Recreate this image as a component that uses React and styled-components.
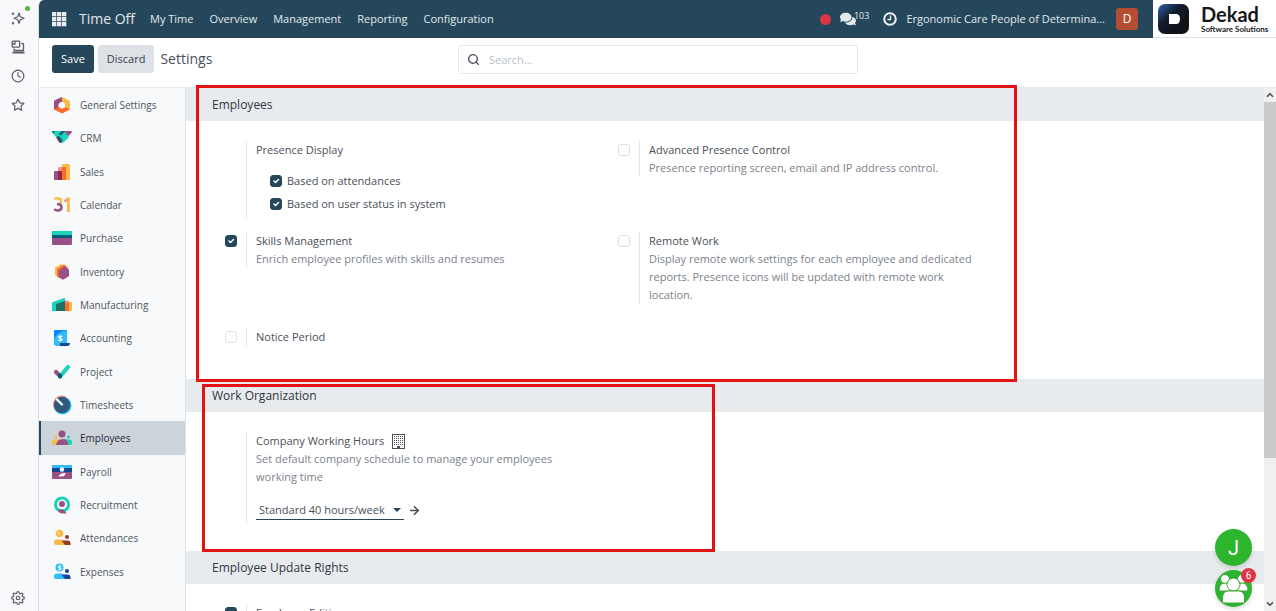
import { useState } from "react";
import styled, { createGlobalStyle } from "styled-components";
import { FaComments } from "react-icons/fa";
import { FiArrowRight, FiChevronDown, FiChevronUp, FiClock, FiSearch, FiSettings, FiStar } from "react-icons/fi";

const GlobalStyle = createGlobalStyle`
  *, *::before, *::after {
    box-sizing: border-box;
  }

  body {
    margin: 0;
    background: #f9f9fb;
    color: #4a4f59;
    font-family: "Open Sans", "Noto Sans", sans-serif;
    font-size: 11px;
    line-height: 18px;
  }

  button, input, select {
    font: inherit;
    color: inherit;
  }

  a {
    color: inherit;
    text-decoration: none;
  }
`;

const Page = styled.div`
  position: relative;
  display: flex;
  height: 100vh;
  overflow: hidden;
`;

const Rail = styled.aside`
  display: flex;
  flex: 0 0 38px;
  flex-direction: column;
  align-items: center;
  gap: 15px;
  padding: 11px 3px 6px 0;
  color: #5b5b66;
`;

const RailButton = styled.button`
  position: relative;
  display: block;
  width: 14px;
  height: 14px;
  margin-top: ${({ $bottom }) => ($bottom ? "auto" : "0")};
  padding: 0;
  border: 0;
  background: none;

  svg {
    display: block;
    width: 14px;
    height: 14px;
  }
`;

const OnlineDot = styled.span`
  position: absolute;
  top: -5px;
  right: -5px;
  width: 5px;
  height: 5px;
  border-radius: 50%;
  background: #4fb83d;
`;

const Shell = styled.div`
  display: flex;
  flex: 1;
  flex-direction: column;
  min-width: 0;
  border-left: 1px solid #dcdee2;
  border-top-left-radius: 6px;
  background: #fff;
  overflow: hidden;
`;

const TopBar = styled.header`
  display: flex;
  flex: 0 0 38px;
  background: #25475b;
  color: #e3e8eb;
`;

const Nav = styled.nav`
  display: flex;
  flex: 1;
  align-items: center;
  gap: 16px;
  padding-left: 13px;
`;

const AppsButton = styled.button`
  display: flex;
  width: 15px;
  padding: 0;
  border: 0;
  background: none;
`;

const AppName = styled.a`
  margin: 0 -1px 0 -4px;
  font-size: 14px;
`;

const Systray = styled.div`
  display: flex;
  align-items: center;
  padding-right: 15px;
`;

const RecordDot = styled.span`
  width: 11px;
  height: 11px;
  margin-right: 9px;
  border-radius: 50%;
  background: #dc3545;
`;

const Messages = styled.button`
  display: flex;
  align-items: center;
  padding: 0;
  border: 0;
  background: none;
  color: #e3e8eb;

  sup {
    margin: 0 0 6px -2px;
    font-size: 9px;
    line-height: 10px;
  }
`;

const ClockButton = styled.button`
  display: flex;
  margin: 0 9px 0 14px;
  padding: 0;
  border: 0;
  background: none;
`;

const Avatar = styled.span`
  width: 22px;
  height: 22px;
  margin-left: 11px;
  border-radius: 3px;
  background: #b44d31;
  color: #fff;
  font-size: 12px;
  line-height: 22px;
  text-align: center;
`;

const Brand = styled.a`
  display: flex;
  flex: 0 0 123px;
  gap: 11px;
  padding: 4px 0 0 5px;
  border-bottom: 1px solid #dee2e6;
  background: #fff;
  color: #16181c;
  font-family: Lato, sans-serif;
  font-weight: 700;
  white-space: nowrap;
`;

const BrandText = styled.span`
  display: flex;
  flex-direction: column;

  strong {
    font-size: 20px;
    font-weight: 700;
    line-height: 21px;
  }

  small {
    font-size: 8px;
    line-height: 9px;
  }
`;

const ControlPanel = styled.div`
  display: flex;
  flex: 0 0 49px;
  align-items: flex-start;
  padding: 7px 12px 0 13px;
`;

const Actions = styled.div`
  display: flex;
  flex: 0 0 406px;
  align-items: center;
  gap: 4px;
`;

const Button = styled.button`
  height: 28px;
  padding: 0 9px;
  border: 0;
  border-radius: 3px;
  background: ${({ $primary }) => ($primary ? "#25475b" : "#dee2e6")};
  color: ${({ $primary }) => ($primary ? "#fff" : "#374151")};
`;

const Title = styled.h1`
  margin: 0 0 0 2px;
  font-size: 14px;
  font-weight: 400;
`;

const SearchBox = styled.label`
  display: flex;
  flex: 0 1 400px;
  align-items: center;
  gap: 9px;
  height: 29px;
  padding: 0 8px;
  border: 1px solid #e7e9ed;
  border-radius: 3px;

  input {
    flex: 1;
    min-width: 0;
    padding: 0;
    border: 0;
    outline: 0;
    background: none;
  }

  input::placeholder {
    color: #b9c0ca;
    opacity: 1;
  }
`;

const Body = styled.div`
  display: flex;
  flex: 1;
  min-height: 0;
  border-top: 1px solid #e7e9ed;
`;

const Sidebar = styled.nav`
  flex: 0 0 147px;
  border-right: 1px solid #dee2e6;
  background: #f8f9fa;
  font-size: 10px;
`;

const Tab = styled.a`
  display: flex;
  align-items: center;
  gap: 8px;
  height: 33px;
  padding-left: ${({ $active }) => ($active ? "11px" : "13px")};
  border-left: ${({ $active }) => ($active ? "2px solid #25475b" : "0")};
  background: ${({ $active }) => ($active ? "#ccd3d9" : "transparent")};
  color: ${({ $active }) => ($active ? "#1f2937" : "#4f5560")};

  &:nth-child(3n + 2) {
    height: 34px;
  }
`;

const Content = styled.main`
  flex: 1;
  min-width: 0;
  overflow: hidden;
`;

const SectionTitle = styled.h2`
  height: 33px;
  margin: 0;
  padding-left: 26px;
  background: #e7ebee;
  color: #30363f;
  font-size: 12px;
  font-weight: 400;
  line-height: 34px;
`;

const Settings = styled.div`
  display: grid;
  grid-template-columns: 393px 393px;
  row-gap: 24px;
  padding: ${({ $top = 20 }) => $top}px 0 ${({ $bottom }) => $bottom}px 33px;
`;

const Setting = styled.div`
  display: flex;
  align-items: flex-start;
`;

const CheckCell = styled.div`
  display: flex;
  flex: 0 0 27px;
  padding: 3px 0 0 6px;
`;

const SettingBody = styled.div`
  min-height: ${({ $tall }) => ($tall ? "78px" : "18px")};
  width: 346px;
  padding-left: 9px;
  border-left: 1px solid #e7e9ed;

  p {
    margin: 0;
    color: #7c828b;
  }
`;

const SettingTitle = styled.label`
  display: flex;
  align-items: center;
  gap: 8px;
`;

const Checkbox = styled.input.attrs({ type: "checkbox" })`
  flex: none;
  width: 12px;
  height: 12px;
  margin: 0;
  appearance: none;
  border: 1px solid #dee2e6;
  border-radius: 3px;
  background: #fff;

  &:checked {
    border-color: #25475b;
    background: #25475b
      url("data:image/svg+xml,%3Csvg xmlns='http://www.w3.org/2000/svg' viewBox='0 0 20 20'%3E%3Cpath fill='none' stroke='%23fff' stroke-linecap='round' stroke-linejoin='round' stroke-width='3' d='m6 10 3 3 6-6'/%3E%3C/svg%3E");
  }
`;

const CheckList = styled.div`
  display: flex;
  flex-direction: column;
  gap: 5px;
  padding: 13px 0 0 14px;
`;

const CheckLabel = styled.label`
  display: flex;
  align-items: center;
  gap: 5px;
`;

const ScheduleRow = styled.div`
  display: flex;
  align-items: center;
  gap: 4px;
  padding: 14px 0 4px;

  a {
    display: flex;
    color: #4a4f59;
  }
`;

const SelectWrap = styled.div`
  display: flex;
  align-items: center;
  width: 148px;
  border-bottom: 1px solid #25475b;

  select {
    flex: 1;
    min-width: 0;
    height: 19px;
    padding: 0 0 0 3px;
    appearance: none;
    border: 0;
    outline: 0;
    background: none;
  }
`;

const Caret = styled.span`
  margin-right: 3px;
  border: 4px solid transparent;
  border-top-color: #25475b;
  border-bottom: 0;
`;

const ScrollBar = styled.div`
  display: flex;
  flex: 0 0 12px;
  flex-direction: column;
  align-items: center;
  background: #f0f0f0;
  color: #505050;

  svg {
    flex: none;
    margin: 2px 0;
  }
`;

const Thumb = styled.div`
  width: 12px;
  height: 68%;
  margin-bottom: auto;
  background: #cbcbcb;
`;

const Highlight = styled.div`
  position: absolute;
  top: ${({ $top }) => $top}px;
  left: ${({ $left }) => $left}px;
  width: ${({ $width }) => $width}px;
  height: ${({ $height }) => $height}px;
  border: 3px solid #e41313;
  pointer-events: none;
`;

const ChatHeads = styled.div`
  position: absolute;
  right: 24px;
  bottom: 4px;
  display: flex;
  flex-direction: column;
  gap: 4px;
`;

const ChatHead = styled.button`
  position: relative;
  width: 37px;
  height: 37px;
  padding: 0;
  border: 0;
  border-radius: 50%;
  background: #2eb52e;
  box-shadow: 0 2px 5px rgba(0, 0, 0, 0.15);
  color: #fff;
  font-family: Roboto, sans-serif;
  font-size: 20px;

  svg {
    display: block;
  }
`;

const Badge = styled.span`
  position: absolute;
  top: -2px;
  right: -4px;
  width: 15px;
  height: 15px;
  border-radius: 50%;
  background: #dc3545;
  font-size: 10px;
  line-height: 15px;
`;

// App icons, all on a 20x20 grid
const appIcons = {
  settings: (
    <>
      <path d="M10 2v5L6 10l1 3-5 2V7q0-1 1-2z" fill="#985184" />
      <path d="M10 2l6 3q2 1 2 2v7l-5-2V9l-3-2z" fill="#fbb945" />
      <path d="M2 14l5-2 3 2 3-2 5 2-1 1-6 3q-1 .6-2 0l-6-3z" fill="#fc6b2a" />
      <circle cx="10" cy="10" r="3.1" fill="#f8f9fa" />
    </>
  ),
  crm: (
    <>
      <path d="M1 3h12l4 6-5 5q-2 2-4 0L0 4q0-1 1-1z" fill="#1ad3bb" />
      <path d="M0 4q0-1 1-1h2L1.500 6z" fill="#1f7166" />
      <path d="M12 3h7q1.500 .5.600 1.800L16.500 8z" fill="#985184" />
      <path d="M7 5.500l3-2.500h3l-3 3.500-2 1z" fill="#005e7a" />
      <path d="M4 9l2 0 4 4-1 2q-1.500 0-2.500-1.500z" fill="#613a66" />
      <path d="M5 8h2l3.500 4-1 1.500z" fill="#005e7a" />
    </>
  ),
  sales: (
    <>
      <rect x="10" y="2" width="8" height="16" rx="1.500" fill="#fbb945" />
      <path d="M6 7q0-2 2-2h3v13H6z" fill="#f78b8b" />
      <path d="M10 5h4v13h-4z" fill="#fc6b2a" />
      <path d="M2 10q0-1 1-1h4v9H3q-1 0-1-1z" fill="#985184" />
      <path d="M6 9h3q1 0 1 1v8H6z" fill="#8e2947" />
    </>
  ),
  calendar: (
    <>
      <path d="M2.500 3.500h4q2.500 0 2.500 2.500 0 2.500-2.500 3.500" fill="none" stroke="#fbb945" strokeWidth="2.500" />
      <path d="M5 9.300h1.500q3 .4 3 3 0 3.200-3.700 3.200-2.300 0-3.500-1.500" fill="none" stroke="#985184" strokeWidth="2.500" />
      <path d="M12.500 6.500l4-3" stroke="#f78b8b" strokeWidth="2.500" />
      <path d="M14.800 2.500h3v14.500h-2.800V6z" fill="#fbb945" />
    </>
  ),
  purchase: (
    <>
      <rect y="3" width="20" height="14" rx="1" fill="#985184" />
      <path d="M0 6h20v4H0z" fill="#005e7a" />
      <path d="M1 3h18q1 0 1 1v3H0V4q0-1 1-1z" fill="#1ad3bb" />
    </>
  ),
  inventory: (
    <>
      <path d="M9 2l5 3-7 10-4-2V6q0-1 1-1z" fill="#fbb945" />
      <path d="M12 2.500l4 3-8 11-3-2V7z" fill="#fc6b2a" />
      <path d="M12 4.500l4 2.200q1 .5 1 1.500v5q0 1-1 1.500l-4 2.500q-1 .6-2 0l-3-2V9z" fill="#985184" />
    </>
  ),
  manufacturing: (
    <>
      <path d="M15 7h4q1 0 1 1v8h-5z" fill="#fbb945" />
      <path d="M12 7q0-1.500 1-1.500h3q1 0 1 1V16h-5z" fill="#f78b8b" />
      <path d="M12 8h5v8h-5z" fill="#fc6b2a" />
      <path d="M0 8q0-1 1-1l11-4q1-.3 1 1v12H0z" fill="#1ad3bb" />
      <path d="M4 9l9-3v10H4z" fill="#1f7166" />
    </>
  ),
  accounting: (
    <>
      <path d="M2 3q0-1 1-1h12v13q0 2 1 3H5q-3 0-3-3z" fill="#2ebcfa" />
      <path d="M2 3q0-1 1-1h12Q5 4 2 11z" fill="#0c84fa" />
      <path d="M8 15h10q0 3-3 3H8z" fill="#144496" />
      <text x="5.500" y="13.500" fontSize="9" fontWeight="700" fill="#fff">$</text>
    </>
  ),
  project: (
    <g fill="none" strokeWidth="4.200" strokeLinecap="round">
      <path d="M8 14.500l8-9.500" stroke="#1ad3bb" />
      <path d="M4 10l2 2" stroke="#985184" />
      <path d="M8 13.500v1" stroke="#005e7a" />
    </g>
  ),
  timesheets: (
    <>
      <circle cx="10.500" cy="10.500" r="9" fill="#2ebcfa" />
      <path d="M1 10a9 9 0 0 1 13-8.500L4 16q-3-3-3-6z" fill="#f78b8b" />
      <circle cx="10" cy="10" r="8.200" fill="#2f5a7d" />
      <path d="M5 4.500l5 5" stroke="#fff" strokeWidth="2.400" strokeLinecap="round" />
    </>
  ),
  employees: (
    <>
      <circle cx="3.500" cy="9" r="1.500" fill="#fbb945" />
      <circle cx="16.500" cy="9" r="1.500" fill="#1ad3bb" />
      <path d="M0 14q0-2.500 3-2.500h5V17H2q-2 0-2-2z" fill="#fbb945" />
      <path d="M12 11.500h5q3 0 3 2.500v1q0 2-2 2h-6z" fill="#1ad3bb" />
      <circle cx="10" cy="6" r="3.500" fill="#985184" />
      <path d="M4 17q1-6 7-6 4 0 5 4v2z" fill="#985184" />
    </>
  ),
  payroll: (
    <>
      <rect y="3" width="20" height="14" rx="1" fill="#985184" />
      <path d="M0 6h20v4H0z" fill="#144496" />
      <path d="M1 3h18q1 0 1 1v2H0V4q0-1 1-1z" fill="#2ebcfa" />
      <circle cx="10" cy="7.500" r="2.200" fill="#fff" />
      <path d="M6.500 14.500q1-3.500 7-3.500-.5 3.500-4 3.500z" fill="#fff" />
    </>
  ),
  recruitment: (
    <>
      <circle cx="10" cy="9.500" r="6.600" fill="none" stroke="#1ad3bb" strokeWidth="3" />
      <circle cx="10" cy="9" r="3" fill="#985184" />
      <path d="M6 14.500h5l4 4h-4q-5 0-5-4z" fill="#985184" />
    </>
  ),
  attendances: (
    <>
      <circle cx="7.500" cy="5.500" r="3.800" fill="#fbb945" />
      <path d="M5.500 4l2 2" stroke="#fff" fill="none" />
      <circle cx="15" cy="9" r="2" fill="#953b24" />
      <path d="M2 14q0-2.500 3-2.500h5l4 5.500H5q-3 0-3-2z" fill="#fbb945" />
      <path d="M9.500 12.500h6q3 0 3 3v1.500H13z" fill="#953b24" />
    </>
  ),
  expenses: (
    <>
      <circle cx="7.500" cy="5.500" r="4" fill="#2ebcfa" />
      <text x="5.500" y="8" fontSize="7" fontWeight="700" fill="#fff">$</text>
      <circle cx="15" cy="9" r="2" fill="#144496" />
      <path d="M2 14q0-2.500 3-2.500h5l4 5.500H5q-3 0-3-2z" fill="#2ebcfa" />
      <path d="M9.500 12.500h6q3 0 3 3v1.500H13z" fill="#144496" />
    </>
  ),
};

const tabs = [
  ["settings", "General Settings"],
  ["crm", "CRM"],
  ["sales", "Sales"],
  ["calendar", "Calendar"],
  ["purchase", "Purchase"],
  ["inventory", "Inventory"],
  ["manufacturing", "Manufacturing"],
  ["accounting", "Accounting"],
  ["project", "Project"],
  ["timesheets", "Timesheets"],
  ["employees", "Employees"],
  ["payroll", "Payroll"],
  ["recruitment", "Recruitment"],
  ["attendances", "Attendances"],
  ["expenses", "Expenses"],
];

const menus = ["My Time", "Overview", "Management", "Reporting", "Configuration"];

const SparkleIcon = () => (
  <svg viewBox="0 0 14 14" fill="none" stroke="currentColor" strokeWidth="1.200" strokeLinejoin="round">
    <path d="M8 2l1.300 3.700L13 7.200 9.300 8.700 8 12.400 6.700 8.700 3 7.200l3.700-1.500z" />
    <path d="M2 1.500v2.400M.8 2.700h2.400M2 11v2.400M.8 12.200h2.400" />
  </svg>
);

const DevicesIcon = () => (
  <svg viewBox="0 0 14 14" fill="none" stroke="currentColor" strokeWidth="1.300">
    <rect x="1.200" y="1.200" width="7.500" height="6" rx="1" />
    <path d="M1 4h3V1.500M10.500 3.500h1q1 0 1 1V10.500M3 8.500v2M3 10.500h10" />
    <path d="M1.500 12.500h12" strokeWidth="2" />
  </svg>
);

const AppsIcon = () => (
  <svg width="15" height="15" viewBox="0 0 15 15" fill="#e9edef">
    {[0, 5, 10].map((y) => [0, 5, 10].map((x) => <rect key={`${x}-${y}`} x={x} y={y} width="4.300" height="4.300" />))}
  </svg>
);

const ActivityIcon = () => (
  <svg width="14" height="14" viewBox="0 0 14 14" fill="none" stroke="#f0f3f5">
    <circle cx="7" cy="7" r="5.800" strokeWidth="2" />
    <path d="M7.500 3.500v4H4.500" strokeWidth="1.300" />
  </svg>
);

const BuildingIcon = () => (
  <svg width="13" height="15" viewBox="0 0 13 15" fill="#4a4f59">
    <path d="M0 0h13v1H0zM0 14h13v1H0zM0 0h1v15H0zM12 0h1v15h-1z" />
    {[2, 4, 6, 8, 10].map((y) => [2, 4, 6, 8, 10].map((x) => <rect key={`${x}-${y}`} x={x} y={y} width="1" height="1" />))}
    <path d="M5 12h3v2H5z" />
  </svg>
);

const BrandMark = () => (
  <svg width="32" height="30" viewBox="0 0 32 30">
    <defs>
      <linearGradient id="mark" x1="0" y1="0" x2=".7" y2=".7">
        <stop offset="0" stopColor="#2d62ad" />
        <stop offset=".55" stopColor="#141d2e" />
        <stop offset="1" stopColor="#0f1217" />
      </linearGradient>
    </defs>
    <rect width="31" height="30" rx="7" fill="url(#mark)" />
    <path d="M11 10h7q4 0 4 5t-4 5h-7z" fill="#fff" />
  </svg>
);

const GroupIcon = () => (
  <svg width="37" height="37" viewBox="0 0 37 37" fill="#fff" stroke="#3fa535">
    <circle cx="10" cy="9" r="4.500" />
    <circle cx="27" cy="9" r="4.500" />
    <path d="M4 21q0-8 6-8t6 8zM21 21q0-8 6-8t6 8z" />
    <circle cx="18.500" cy="14.500" r="6.500" />
    <path d="M7.500 32v-4q0-7 6-7h10q6 0 6 7v4q0 1-1 1h-20q-1 0-1-1z" />
  </svg>
);

const Option = ({ id, title, text, checked, children, tall, icon, noCheck }) => (
  <Setting>
    <CheckCell>{!noCheck && <Checkbox id={id} defaultChecked={checked} />}</CheckCell>
    <SettingBody $tall={tall}>
      <SettingTitle htmlFor={id}>
        {title}
        {icon}
      </SettingTitle>
      {text && <p>{text}</p>}
      {children}
    </SettingBody>
  </Setting>
);

const App = () => {
  const [active, setActive] = useState("employees");

  return (
    <Page>
      <GlobalStyle />
      <Rail>
        <RailButton aria-label="Assistant">
          <SparkleIcon />
          <OnlineDot />
        </RailButton>
        <RailButton aria-label="Devices"><DevicesIcon /></RailButton>
        <RailButton aria-label="History"><FiClock /></RailButton>
        <RailButton aria-label="Bookmarks"><FiStar /></RailButton>
        <RailButton aria-label="Customize" $bottom><FiSettings /></RailButton>
      </Rail>

      <Shell>
        <TopBar>
          <Nav>
            <AppsButton aria-label="Apps"><AppsIcon /></AppsButton>
            <AppName href="#">Time Off</AppName>
            {menus.map((menu) => (
              <a href="#" key={menu}>{menu}</a>
            ))}
          </Nav>
          <Systray>
            <RecordDot />
            <Messages aria-label="Messages">
              <FaComments size={16} />
              <sup>103</sup>
            </Messages>
            <ClockButton aria-label="Activities"><ActivityIcon /></ClockButton>
            <span>Ergonomic Care People of Determina...</span>
            <Avatar>D</Avatar>
          </Systray>
          <Brand href="#">
            <BrandMark />
            <BrandText>
              <strong>Dekad</strong>
              <small>Software Solutions</small>
            </BrandText>
          </Brand>
        </TopBar>

        <ControlPanel>
          <Actions>
            <Button $primary>Save</Button>
            <Button>Discard</Button>
            <Title>Settings</Title>
          </Actions>
          <SearchBox>
            <FiSearch size={13} strokeWidth={2.5} />
            <input type="text" placeholder="Search..." aria-label="Search" />
          </SearchBox>
        </ControlPanel>

        <Body>
          <Sidebar>
            {tabs.map(([id, label]) => (
              <Tab href="#" key={id} $active={id === active} onClick={() => setActive(id)}>
                <svg width="20" height="20" viewBox="0 0 20 20">{appIcons[id]}</svg>
                {label}
              </Tab>
            ))}
          </Sidebar>

          <Content>
            <SectionTitle>Employees</SectionTitle>
            <Settings $bottom={13}>
              <Option title="Presence Display" noCheck tall>
                <CheckList>
                  <CheckLabel>
                    <Checkbox defaultChecked />
                    Based on attendances
                  </CheckLabel>
                  <CheckLabel>
                    <Checkbox defaultChecked />
                    Based on user status in system
                  </CheckLabel>
                </CheckList>
              </Option>
              <Option
                id="presence"
                title="Advanced Presence Control"
                text="Presence reporting screen, email and IP address control."
              />
            </Settings>
            <Settings $top={0} $bottom={33}>
              <Option id="skills" title="Skills Management" text="Enrich employee profiles with skills and resumes" checked />
              <Option
                id="remote"
                title="Remote Work"
                text="Display remote work settings for each employee and dedicated reports. Presence icons will be updated with remote work location."
              />
              <Option id="notice" title="Notice Period" />
            </Settings>

            <SectionTitle>Work Organization</SectionTitle>
            <Settings $bottom={27}>
              <Option
                id="schedule"
                title="Company Working Hours"
                icon={<BuildingIcon />}
                text="Set default company schedule to manage your employees working time"
                noCheck
              >
                <ScheduleRow>
                  <SelectWrap>
                    <select id="schedule">
                      <option>Standard 40 hours/week</option>
                    </select>
                    <Caret />
                  </SelectWrap>
                  <a href="#" aria-label="Open schedule"><FiArrowRight size={13} strokeWidth={3} /></a>
                </ScheduleRow>
              </Option>
            </Settings>

            <SectionTitle>Employee Update Rights</SectionTitle>
            <Settings $bottom={20}>
              <Option id="editing" title="Employee Editing" checked />
            </Settings>
          </Content>

          <ScrollBar>
            <FiChevronUp size={10} strokeWidth={4} />
            <Thumb />
            <FiChevronDown size={10} strokeWidth={4} />
          </ScrollBar>
        </Body>
      </Shell>

      <Highlight $top={85} $left={196} $width={821} $height={297} />
      <Highlight $top={384} $left={202} $width={513} $height={168} />

      <ChatHeads>
        <ChatHead aria-label="Chat with J">J</ChatHead>
        <ChatHead aria-label="Group chat">
          <GroupIcon />
          <Badge>6</Badge>
        </ChatHead>
      </ChatHeads>
    </Page>
  );
};

export default App;
